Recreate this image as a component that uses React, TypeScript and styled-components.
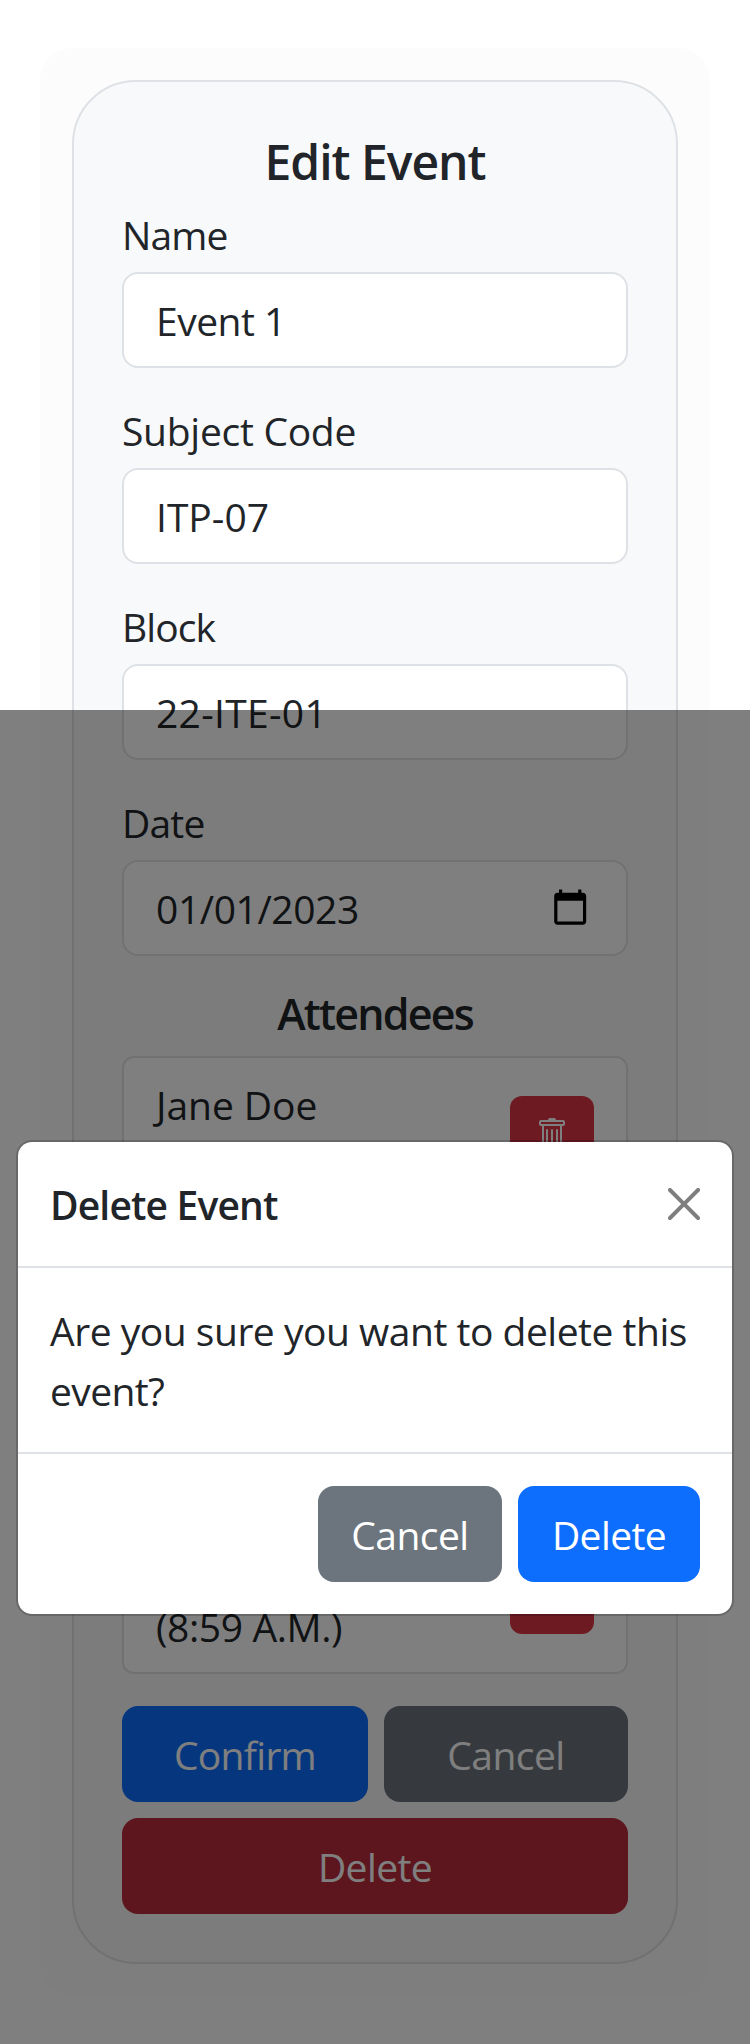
import React from 'react';
import styled, { createGlobalStyle } from 'styled-components';
import { BsTrash } from 'react-icons/bs';

const GlobalStyle = createGlobalStyle`
  *, *::before, *::after { box-sizing: border-box; }
  body {
    margin: 0;
    background: #fff;
    color: #212529;
    font-family: 'Open Sans', 'Noto Sans', sans-serif;
    font-size: 39px;
    line-height: 60px;
  }
`;

const Page = styled.main`
  position: relative;
  height: 2044px;
  padding: 48px 40px;
  overflow: hidden;
`;

const Panel = styled.section`
  padding: 32px;
  border-radius: 32px;
  background: #fcfcfc;
`;

const Card = styled.form`
  display: flex;
  flex-direction: column;
  padding: 48px;
  border: 2px solid #dee2e6;
  border-radius: 64px;
  background: #f8f9fa;
`;

/* One 60px line of text, its letters optionally tightened. */
const Line = styled.span<{ $tracking?: number }>`
  display: block;
  height: 60px;
  line-height: 62px;
  letter-spacing: ${(p) => p.$tracking ?? 0}px;
  white-space: nowrap;
`;

const Title = styled.h1`
  height: 58px;
  margin: 0 0 16px;
  font-size: 48px;
  font-weight: 600;
  line-height: 64px;
  letter-spacing: -1px;
  text-align: center;
`;

const Subtitle = styled.h2`
  height: 52px;
  margin: 0 0 16px;
  font-size: 43px;
  font-weight: 600;
  line-height: 52px;
  letter-spacing: -1.8px;
  text-align: center;
`;

const Field = styled.label`
  display: flex;
  flex-direction: column;
  gap: 8px;
  margin-bottom: 32px;
`;

const Control = styled.div`
  display: flex;
  align-items: center;
  justify-content: space-between;
  height: 96px;
  padding: 0 37px 0 32px;
  border: 2px solid #dee2e6;
  border-radius: 16px;
  background: #fff;
`;

const CalendarIcon = styled.svg`
  width: 38.4px;
  height: 38.4px;
  margin-bottom: 2px;
  fill: #000;
`;

const Attendees = styled.ul`
  display: flex;
  flex-direction: column;
  justify-content: space-between;
  height: 618px;
  margin: 0 0 32px;
  padding: 16px 32px;
  border: 2px solid #dee2e6;
  border-radius: 12px;
  background: #fff;
  list-style: none;
`;

const Attendee = styled.li`
  display: flex;
  align-items: center;
  justify-content: space-between;
`;

const RemoveButton = styled.button`
  display: flex;
  align-items: center;
  justify-content: center;
  width: 84px;
  height: 76px;
  padding: 0;
  border: 0;
  border-radius: 12px;
  background: #dc3545;
  color: #fff;
`;

const Actions = styled.div`
  display: grid;
  grid-template-columns: 246px 244px;
  gap: 16px;
`;

const tones = { primary: '#0d6efd', secondary: '#6c757d', danger: '#bb2d3b' };

const Button = styled.button<{ $tone: keyof typeof tones; $width?: number; $wide?: boolean }>`
  display: flex;
  align-items: center;
  justify-content: center;
  width: ${(p) => (p.$width ? `${p.$width}px` : 'auto')};
  height: 96px;
  padding: 0;
  border: 0;
  border-radius: 16px;
  background: ${(p) => tones[p.$tone]};
  color: #fff;
  font: inherit;
  ${(p) => p.$wide && 'grid-column: 1 / -1;'}
`;

const Backdrop = styled.div`
  position: absolute;
  inset: 710px 0 0;
  background: rgba(0, 0, 0, 0.5);
`;

const Modal = styled.div`
  position: absolute;
  top: 1140px;
  left: 16px;
  width: 718px;
  border: 2px solid rgba(0, 0, 0, 0.175);
  border-radius: 16px;
  background: #fff;
  background-clip: padding-box;
`;

const ModalHeader = styled.header`
  display: flex;
  align-items: center;
  justify-content: space-between;
  padding: 32px;
  border-bottom: 2px solid #dee2e6;
  font-weight: 600;
`;

const CloseIcon = styled.svg`
  width: 32px;
  height: 32px;
  opacity: 0.5;
`;

const ModalBody = styled.div`
  padding: 32px;
`;

const ModalFooter = styled.footer`
  display: flex;
  justify-content: flex-end;
  gap: 16px;
  padding: 32px;
  border-top: 2px solid #dee2e6;
`;

const fields = [
  { label: 'Name', labelTracking: -0.9, value: 'Event 1', tracking: -0.5 },
  { label: 'Subject Code', labelTracking: -0.28, value: 'ITP-07', tracking: 0 },
  { label: 'Block', labelTracking: -0.9, value: '22-ITE-01', tracking: 0.3 },
  { label: 'Date', labelTracking: -0.8, value: '01/01/2023', tracking: -0.42, date: true },
];

const attendees = [
  { name: 'Jane Doe', time: '(8:59 A.M.)' },
  { name: 'John Doe', time: '(8:59 A.M.)' },
];

export default function App() {
  return (
    <Page>
      <GlobalStyle />
      <Panel>
        <Card>
          <Title>Edit Event</Title>
          {fields.map((f) => (
            <Field key={f.label}>
              <Line $tracking={f.labelTracking}>{f.label}</Line>
              <Control>
                <Line $tracking={f.tracking}>{f.value}</Line>
                {f.date && (
                  <CalendarIcon viewBox="0 0 24 24">
                    <path d="M20 3h-1V1h-2v2H7V1H5v2H4c-1.1 0-2 .9-2 2v16c0 1.1.9 2 2 2h16c1.1 0 2-.9 2-2V5c0-1.1-.9-2-2-2zm0 18H4V8h16v13z" />
                  </CalendarIcon>
                )}
              </Control>
            </Field>
          ))}
          <Subtitle>Attendees</Subtitle>
          <Attendees>
            {attendees.map((a) => (
              <Attendee key={a.name}>
                <div>
                  <Line $tracking={-0.05}>{a.name}</Line>
                  <Line $tracking={-0.4}>{a.time}</Line>
                </div>
                <RemoveButton type="button" aria-label="Remove">
                  <BsTrash size={32} />
                </RemoveButton>
              </Attendee>
            ))}
          </Attendees>
          <Actions>
            <Button type="button" $tone="primary"><Line $tracking={-0.7}>Confirm</Line></Button>
            <Button type="button" $tone="secondary"><Line $tracking={-0.55}>Cancel</Line></Button>
            <Button type="button" $tone="danger" $wide><Line $tracking={-0.6}>Delete</Line></Button>
          </Actions>
        </Card>
      </Panel>
      <Backdrop />
      <Modal role="dialog">
        <ModalHeader>
          <Line $tracking={-0.84}>Delete Event</Line>
          <CloseIcon viewBox="0 0 16 16">
            <path d="M.293.293a1 1 0 0 1 1.414 0L8 6.586 14.293.293a1 1 0 1 1 1.414 1.414L9.414 8l6.293 6.293a1 1 0 0 1-1.414 1.414L8 9.414l-6.293 6.293a1 1 0 0 1-1.414-1.414L6.586 8 .293 1.707a1 1 0 0 1 0-1.414z" />
          </CloseIcon>
        </ModalHeader>
        <ModalBody>
          <Line $tracking={-0.48}>Are you sure you want to delete this</Line>
          <Line $tracking={-0.6}>event?</Line>
        </ModalBody>
        <ModalFooter>
          <Button type="button" $tone="secondary" $width={184}><Line $tracking={-0.55}>Cancel</Line></Button>
          <Button type="button" $tone="primary" $width={182}><Line $tracking={-0.6}>Delete</Line></Button>
        </ModalFooter>
      </Modal>
    </Page>
  );
}
